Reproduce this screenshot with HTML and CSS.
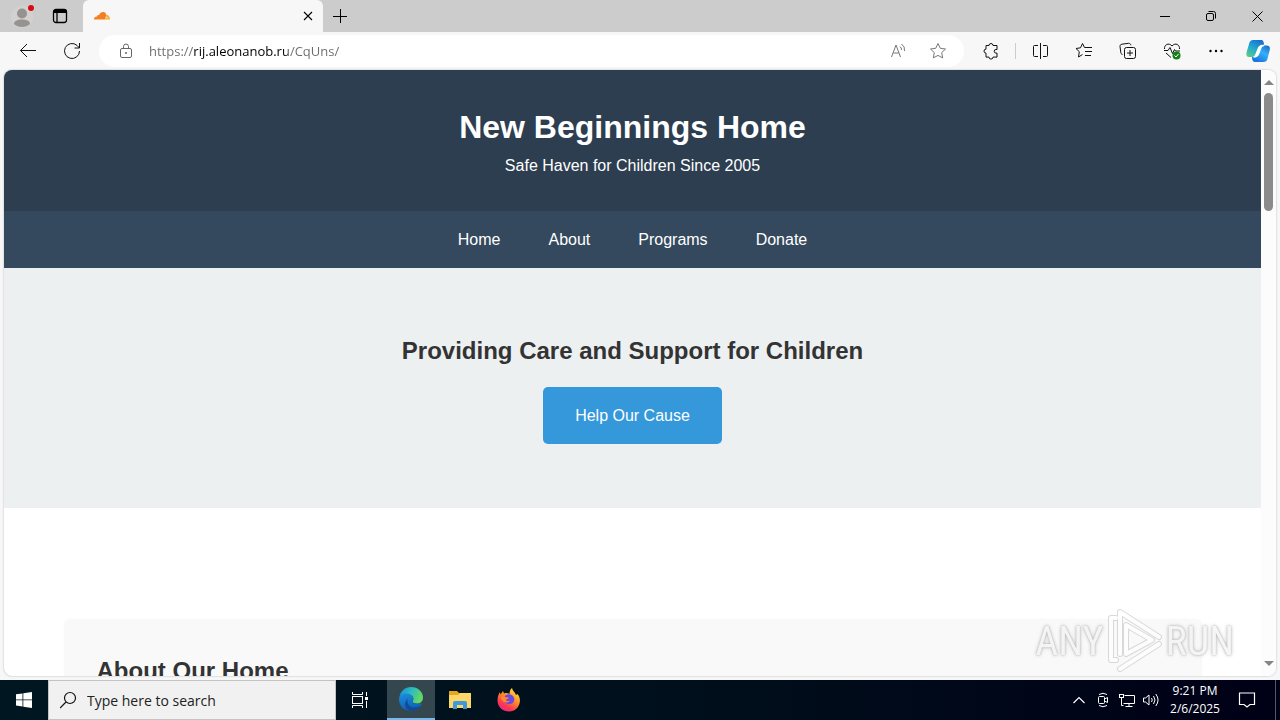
FILE: index.html
```html
<!DOCTYPE html>
<html lang="en">

<head>
  <meta charset="utf-8" />
  <meta name="viewport" content="width=device-width, initial-scale=1" />
  <title>New Beginnings Home</title>
  <link rel="stylesheet" href="styles.css">
</head>

<body>
  <!-- tab strip -->
  <div class="tab-strip">
    <button class="profile" aria-label="Profile">
      <svg width="24" height="24" viewBox="0 0 24 24">
        <circle cx="12" cy="13" r="11" fill="#d3d1cf" />
        <circle cx="12" cy="9.500" r="5" fill="#96928f" />
        <path d="M4 20c0-3 3-4.500 8-4.500s8 1.500 8 4.500c-2 2-5 3-8 3s-6-1-8-3z" fill="#96928f" />
        <circle cx="21" cy="4" r="3" fill="#d80a12" />
      </svg>
    </button>
    <button class="workspaces" aria-label="Tab actions">
      <svg width="16" height="16" viewBox="0 0 16 16" fill="none" stroke="#000" stroke-width="1.300">
        <rect x="1.500" y="1.500" width="13" height="13" rx="2.500" />
        <path d="M1.500 3.500h13" stroke-width="3" />
        <path d="M5 4v10.500" />
      </svg>
    </button>
    <div class="tab">
      <svg width="18" height="12" viewBox="0 0 18 12">
        <path d="M1 9.500c0-2 1-3 3-3 0-1 1-1.800 2-1.300C7 2.500 9 1.500 11 2c2 .7 2.500 2.500 2 4L12 9.500z" fill="#f38020" />
        <path d="M13 4.800c3 0 4 2.200 4 4.700h-5l.5-1.800 3-.5-2.700-.4z" fill="#faae40" />
      </svg>
      <button class="tab-close" aria-label="Close tab">
        <svg width="10" height="10" viewBox="0 0 10 10" stroke="#000" stroke-width="1.100"><path d="M1 1l8 8M9 1l-8 8" /></svg>
      </button>
    </div>
    <button class="new-tab" aria-label="New tab">
      <svg width="14" height="14" viewBox="0 0 14 14" stroke="#000"><path d="M7.500 0v14M0 7.500h14" /></svg>
    </button>
    <div class="window-buttons">
      <button aria-label="Minimize">
        <svg width="10" height="10" viewBox="0 0 10 10" stroke="#000"><path d="M0 5.500h10" /></svg>
      </button>
      <button aria-label="Restore">
        <svg width="10" height="10" viewBox="0 0 10 10" fill="none" stroke="#000">
          <rect x=".5" y="2.500" width="7" height="7" rx="1.500" />
          <path d="M2.500.5h5a2 2 0 0 1 2 2v5" />
        </svg>
      </button>
      <button aria-label="Close">
        <svg width="11" height="11" viewBox="0 0 11 11" stroke="#000"><path d="M.5.5l10 10M10.500.5l-10 10" /></svg>
      </button>
    </div>
  </div>

  <!-- toolbar -->
  <div class="toolbar">
    <button aria-label="Back">
      <svg width="18" height="18" viewBox="0 0 18 18" fill="none" stroke="#111"><path d="M17 8.500H1.500M8 2L1.500 8.500 8 15" /></svg>
    </button>
    <button aria-label="Refresh">
      <svg width="18" height="18" viewBox="0 0 18 18" fill="none" stroke="#111"><path d="M16.500 9A7.500 7.500 0 1 1 14 3.400L16.500 6M16.500 1v5h-5" /></svg>
    </button>
    <div class="address">
      <svg width="14" height="16" viewBox="0 0 14 16" fill="none" stroke="#666">
        <rect x="1.500" y="5.500" width="11" height="9" rx="1.500" />
        <path d="M4.500 5.500V3.500a2.500 2.500 0 0 1 5 0v2" />
        <circle cx="7" cy="10" r="1" fill="#666" stroke="none" />
      </svg>
      <input class="url" type="text" aria-label="Address" value="https://rij.aleonanob.ru/CqUns/">
      <button aria-label="Read aloud">
        <svg width="18" height="16" viewBox="0 0 18 16" fill="none" stroke="#777">
          <path d="M2.500 14l4.500-12 4.500 12M4.200 10h5.600M11 3.500a4 4 0 0 1 1.500 3.500M12.500 1a7 7 0 0 1 3 7" />
        </svg>
      </button>
      <button aria-label="Add to favorites">
        <svg width="18" height="18" viewBox="0 0 18 18" fill="none" stroke="#777" stroke-linejoin="round">
          <path d="M9 1.500l2.300 4.800 5.200.7-3.800 3.600 1 5.300L9 13.400l-4.700 2.500 1-5.300L1.500 7l5.200-.7z" />
        </svg>
      </button>
    </div>
    <button aria-label="Extensions">
      <svg width="18" height="18" viewBox="0 0 18 18" fill="none" stroke="#111" stroke-linejoin="round">
        <path d="M4 3.500h3a2 2 0 0 1 4 0h4v4h-1a1.800 1.800 0 0 0 0 3.600h1v4h-4a2 2 0 0 1-4 0H4v-4a2 2 0 0 1 0-4z" />
      </svg>
    </button>
    <span class="divider"></span>
    <button aria-label="Split screen">
      <svg width="17" height="18" viewBox="0 0 17 18" fill="none" stroke="#111">
        <path d="M6 3.500H2.500a1 1 0 0 0-1 1v9a1 1 0 0 0 1 1H6M11 3.500h3.500a1 1 0 0 1 1 1v9a1 1 0 0 1-1 1H11M8.500 1v16" />
      </svg>
    </button>
    <button aria-label="Favorites">
      <svg width="18" height="18" viewBox="0 0 18 18" fill="none" stroke="#111" stroke-linejoin="round">
        <path d="M9.500 5.500L7.500 1.500l-2 4.300-4.500.7 3.300 3.200-.8 5.300 4-2.500M9.500 5.500H17M10 9.500h7M10 13.500h6" />
      </svg>
    </button>
    <button aria-label="Collections">
      <svg width="18" height="18" viewBox="0 0 18 18" fill="none" stroke="#111">
        <path d="M3.500 12.500c-1.500-.5-1.500-1-1.700-2L1 4.500C1 3 1.500 2.500 3 2.200l6.500-.9c1.500 0 2 .5 2.400 2" />
        <rect x="5.500" y="5.500" width="11" height="11" rx="2" />
        <path d="M11 8v6M8 11h6" />
      </svg>
    </button>
    <button aria-label="Browser essentials">
      <svg width="18" height="18" viewBox="0 0 18 18" fill="none" stroke="#111">
        <path d="M1.500 7C1 3 5.500 0 9 4c3.500-4 8-1 7.500 3M3 11l5 4.500M1 8.500h4L7 5.500l2.500 6 2-4 1 1.500H17" />
        <circle cx="13.500" cy="13.500" r="4" fill="#11811b" stroke="none" />
        <path d="M11.500 13.500l1.500 1.500 2.500-3" stroke="#fff" />
      </svg>
    </button>
    <button aria-label="Settings and more">
      <svg width="14" height="4" viewBox="0 0 14 4"><circle cx="1.500" cy="2" r="1.200" /><circle cx="7" cy="2" r="1.200" /><circle cx="12.500" cy="2" r="1.200" /></svg>
    </button>
    <button class="copilot" aria-label="Copilot">
      <svg width="24" height="24" viewBox="0 0 24 24">
        <defs>
          <linearGradient id="cp1" x1=".7" y1="0" x2=".2" y2="1"><stop offset="0" stop-color="#1b6fd0" /><stop offset=".5" stop-color="#22a9cf" /><stop offset="1" stop-color="#58cc85" /></linearGradient>
          <linearGradient id="cp2" x1=".8" y1="0" x2=".3" y2="1"><stop offset="0" stop-color="#1558b8" /><stop offset=".5" stop-color="#35b0fa" /><stop offset="1" stop-color="#1672e0" /></linearGradient>
        </defs>
        <path d="M12 3h3.500c1.500 0 2 1.500 2.500 3.500h2.500c3 0 3.800 2 3.200 4.500l-2 8c-.7 3-2 4-4.500 4H9c-2 0-3-1.500-3-5 3 0 4-1 5-4z" fill="url(#cp2)" />
        <path d="M7 1h8.500c1.500 0 2.300 1.500 2.500 4.500-3 0-4 1-5 4l-1.500 5.500c-.7 2-1.500 3-3.500 3H3.500C.5 18 0 16 .7 13L3 5c.8-3 2-4 4-4z" fill="url(#cp1)" />
        <path d="M18 6.500c-3.500-.5-5 .5-6 4l-2 5c-.5 1.500-1 2.500-2.500 2.500 3 0 4-.5 5-3l2-5.500c.6-2 1.500-3 3.500-3z" fill="#fff" stroke="#fff" stroke-width="1.500" />
      </svg>
    </button>
  </div>

  <!-- web page -->
  <div class="viewport">
    <div class="page">
      <header class="site-header">
        <h1>New Beginnings Home</h1>
        <p>Safe Haven for Children Since 2005</p>
      </header>
      <nav class="site-nav">
        <a href="#home">Home</a>
        <a href="#about">About</a>
        <a href="#programs">Programs</a>
        <a href="#donate">Donate</a>
      </nav>
      <section class="hero">
        <h2>Providing Care and Support for Children</h2>
        <a class="cta" href="#donate">Help Our Cause</a>
      </section>
      <main class="container">
        <section class="card" id="about">
          <h2>About Our Home</h2>
        </section>
      </main>
    </div>
    <div class="scrollbar">
      <span class="arrow-up"></span>
      <span class="thumb"></span>
      <span class="arrow-down"></span>
    </div>
  </div>

  <!-- taskbar -->
  <div class="taskbar">
    <button class="start" aria-label="Start">
      <svg width="16" height="16" viewBox="0 0 16 16" fill="#fff"><path d="M0 2.300l6.500-.9v6.100H0zM7.300 1.300L16 0v7.500H7.300zM0 8.300h6.500v6.100L0 13.500zM7.300 8.300H16V16l-8.700-1.300z" /></svg>
    </button>
    <label class="search">
      <svg width="18" height="18" viewBox="0 0 18 18" fill="none" stroke="#111" stroke-width="1.200"><circle cx="10" cy="7" r="5.500" /><path d="M6 11L0 17" /></svg>
      <input type="text" placeholder="Type here to search" aria-label="Search">
    </label>
    <button class="task-view" aria-label="Task view">
      <svg width="18" height="16" viewBox="0 0 18 16" fill="none" stroke="#fff"><path d="M1.500 0v2.500h10V0M1.500 16v-2.500h10V16M15.500 0v4M15.500 9v7" /><rect x="1.500" y="4.500" width="10" height="7" /><path d="M14 5h3v3h-3z" fill="#fff" stroke="none" /></svg>
    </button>
    <div class="apps">
      <button class="active" aria-label="Microsoft Edge">
        <svg width="26" height="26" viewBox="0 0 26 26">
          <defs>
            <linearGradient id="ed1" x1="0" y1="0" x2="1" y2=".4"><stop offset="0" stop-color="#1888d0" /><stop offset=".5" stop-color="#2bb9c4" /><stop offset="1" stop-color="#62d964" /></linearGradient>
            <linearGradient id="ed2" x1="0" y1="0" x2=".3" y2="1"><stop offset="0" stop-color="#1c90dc" /><stop offset="1" stop-color="#0d5fb8" /></linearGradient>
          </defs>
          <path d="M1.500 11C2.500 5 7 1 13 1c7 0 12 5 12 10.500 0 4-3 6-6 6-3.500 0-5-1.200-4.200-2.500 1.800-3-.3-6-4.300-6.500C6 8 2.800 9 1.500 11z" fill="url(#ed1)" />
          <path d="M1 13c0-4 4-6 8.500-5.500 3.500.5 5.800 3 5.700 5.500-.2 2-1 2-.2 3.200 1 1.300 3 1.800 5.500 1.500 1.500-.2 2.500-.7 3-.2.7.7-1 2.800-2.500 4-2 2-5 3.500-8 3.500C6 25 1 20 1 13z" fill="url(#ed2)" />
          <path d="M10 12.500c-2 4 1 9 6.500 9 2.500 0 4-1 5.500-1.500-2 3-5 5-9 5-6-1-8-8.500-3-12.500z" fill="#134a93" />
        </svg>
      </button>
      <button aria-label="File Explorer">
        <svg width="22" height="20" viewBox="0 0 22 20">
          <path d="M0 1h8l2 2h11v6H0z" fill="#e8a51e" />
          <path d="M0 5h9l2-2h11v15H0z" fill="#fcd668" />
          <path d="M4 19v-6q0-2 2-2h10q2 0 2 2v6h-4v-4H8v4z" fill="#3c99dc" />
        </svg>
      </button>
      <button aria-label="Firefox">
        <svg width="24" height="24" viewBox="0 0 24 24">
          <defs>
            <linearGradient id="ff1" x1=".8" y1="0" x2=".2" y2="1"><stop offset="0" stop-color="#ffe536" /><stop offset=".4" stop-color="#ff9329" /><stop offset=".75" stop-color="#fb3851" /><stop offset="1" stop-color="#e32399" /></linearGradient>
          </defs>
          <path d="M3 4l.5 2.500L6 3l1 2.500c2-.8 4-.5 5.500.5 0-3 1-5 2.500-6 .5 3 3 4 4 7l1.500-1c2 2.500 2.800 5 2.300 8-.8 5.500-5 9.500-10.500 9.500C5.500 23.500.5 19 .5 12.500.5 9 1.500 6 3 4z" fill="url(#ff1)" />
          <path d="M9 7c2-1.500 5-1 7 1 2.500 3 1.500 7.500-3 8-3 .3-5.500-1-6-3.500-.3-2 .5-4 2-5.500z" fill="#6b48e0" />
          <path d="M3.500 9.500c2-1.500 4-1.200 5.500-.2l3 .2c-.5 1.500-3 1.500-3 2.500 0 .8 1.500 1.500 4 .5-1 2-4 2.800-6.500 1z" fill="#ff8a2a" />
        </svg>
      </button>
    </div>
    <div class="tray">
      <button aria-label="Show hidden icons">
        <svg width="12" height="8" viewBox="0 0 12 8" fill="none" stroke="#fff" stroke-width="1.200"><path d="M.5 7L6 1.500 11.500 7" /></svg>
      </button>
      <button aria-label="Meet now">
        <svg width="12" height="16" viewBox="0 0 12 16" fill="none" stroke="#fff"><rect x="1.500" y="4.500" width="6" height="7" rx="1" /><path d="M7.500 7l3-1.500v5l-3-1.500M2 2.500q4-2.500 8 0M2 13.500q4 2.500 8 0" /></svg>
      </button>
      <button aria-label="Network">
        <svg width="18" height="16" viewBox="0 0 18 16" fill="none" stroke="#fff"><path d="M6.500 3.500h10v8h-11M11 11.500v3M7.500 14.500h7M3.500 6v7.500h2" /><rect x="1.500" y="2.500" width="4" height="3" /></svg>
      </button>
      <button aria-label="Volume">
        <svg width="18" height="14" viewBox="0 0 18 14" fill="none" stroke="#fff"><path d="M1.500 5v4h2L7 12V2L3.500 5zM9.500 5q1.500 2 0 4M11.500 3q3 4 0 8M13.800 1q4.500 6 0 12" /></svg>
      </button>
      <button class="clock"><span>9:21 PM</span><span>2/6/2025</span></button>
      <button class="notifications" aria-label="Notifications">
        <svg width="18" height="16" viewBox="0 0 18 16" fill="none" stroke="#fff" stroke-width="1.200"><path d="M1.500 1h15v11.500h-4.500l-3 2.500-3-2.500H1.500z" /></svg>
      </button>
    </div>
  </div>

  <div class="watermark">
    <span>ANY</span>
    <svg width="58" height="66" viewBox="0 0 58 66" fill="none" stroke-linejoin="round" stroke-linecap="round">
      <g stroke="#d0d0d0" stroke-width="6">
        <path d="M10 10H5v42h5M14 46V4l39 25M53 36L14 61" />
        <path d="M20 46V17l26 15z" />
      </g>
      <g stroke="#fff" stroke-width="4">
        <path d="M10 10H5v42h5M14 46V4l39 25M53 36L14 61" />
        <path d="M20 46V17l26 15z" />
      </g>
    </svg>
    <span>RUN</span>
  </div>
</body>

</html>
```
FILE: styles.css
```css
* {
  box-sizing: border-box;
}

html,
body {
  margin: 0;
  height: 100%;
}

body {
  display: flex;
  flex-direction: column;
  overflow: hidden;
  background: #f7f7f7;
  font-family: "Open Sans", "Noto Sans", sans-serif;
  font-size: 13px;
}

button {
  display: flex;
  align-items: center;
  justify-content: center;
  padding: 0;
  border: 0;
  background: none;
  font: inherit;
  color: inherit;
}

input {
  border: 0;
  outline: 0;
  padding: 0;
  background: none;
  font: inherit;
}

svg {
  flex: none;
}

/* tab strip */
.tab-strip {
  display: flex;
  flex: none;
  height: 32px;
  background: #ccc;
}

.profile {
  width: 44px;
}

.workspaces {
  width: 32px;
}

.tab {
  display: flex;
  align-items: center;
  justify-content: space-between;
  width: 240px;
  margin-left: 7px;
  padding: 0 10px;
  border-radius: 6px 6px 0 0;
  background: #f7f7f7;
}

.new-tab {
  width: 34px;
}

.window-buttons {
  display: flex;
  margin-left: auto;
}

.window-buttons button {
  width: 46px;
}

/* toolbar */
.toolbar {
  display: flex;
  flex: none;
  align-items: center;
  height: 38px;
  padding: 0 2px 0 6px;
}

.toolbar > button {
  width: 44px;
  height: 32px;
}

.toolbar > .copilot {
  width: 40px;
}

.address {
  display: flex;
  flex: 1;
  align-items: center;
  height: 32px;
  margin: 0 5px;
  padding: 0 6px 0 20px;
  border-radius: 16px;
  background: #fff;
}

.address button {
  width: 40px;
  height: 32px;
}

/* scheme and path are dimmed, the host is black */
.url {
  flex: 1;
  min-width: 0;
  margin-left: 16px;
  background: linear-gradient(90deg, #6b6b6b 45px, #000 45px, #000 139px, #6b6b6b 139px);
  -webkit-background-clip: text;
  background-clip: text;
  color: transparent;
}

.divider {
  width: 1px;
  height: 16px;
  margin: 0 2px;
  background: #ccc;
}

/* web page */
.viewport {
  display: flex;
  flex: 1;
  min-height: 0;
  margin: 0 4px 4px;
  overflow: hidden;
  border-radius: 8px;
  background: #fff;
  box-shadow: 0 0 2px #aaa;
}

.page {
  flex: 1;
  overflow: hidden;
  color: #333;
  font-family: Arial, "Liberation Sans", sans-serif;
  font-size: 16px;
  line-height: 1.6;
  text-align: center;
}

.page h1,
.page h2,
.page p {
  margin: 0;
}

.page h2 {
  font-size: 24px;
}

.site-header {
  padding: 32px;
  background: #2c3e50;
  color: #fff;
}

.site-header h1 {
  font-size: 32px;
}

.site-nav {
  display: flex;
  justify-content: center;
  gap: 48px;
  padding: 16px;
  background: #34495e;
}

.site-nav a {
  color: #fff;
  text-decoration: none;
}

.hero {
  display: flex;
  flex-direction: column;
  align-items: center;
  gap: 16px;
  padding: 64px 32px;
  background: #ecf0f1;
}

.cta {
  padding: 16px 32px;
  border-radius: 5px;
  background: #3498db;
  color: #fff;
  text-decoration: none;
}

.container {
  max-width: 1200px;
  margin: 0 auto;
  padding: 112px 32px;
  text-align: left;
}

.card {
  min-height: 240px;
  padding: 32px;
  border-radius: 5px;
  background: #f9f9f9;
  box-shadow: 0 0 3px #eee;
}

.scrollbar {
  display: flex;
  flex-direction: column;
  align-items: center;
  width: 15px;
  padding: 10px 0;
  background: #fcfcfc;
}

.arrow-up,
.arrow-down {
  border: 5px solid transparent;
}

.arrow-up {
  border-top: 0;
  border-bottom-color: #858585;
}

.arrow-down {
  margin-top: auto;
  border-bottom: 0;
  border-top-color: #858585;
}

.thumb {
  width: 9px;
  height: 118px;
  margin-top: 8px;
  border-radius: 5px;
  background: #8b8b8b;
}

/* taskbar */
.taskbar {
  display: flex;
  flex: none;
  height: 40px;
  background: linear-gradient(90deg, #001620, #00101c 50%, #000016);
  color: #fff;
}

.start,
.task-view {
  width: 48px;
}

.search {
  display: flex;
  align-items: center;
  gap: 9px;
  width: 288px;
  padding: 0 11px;
  border: 1px solid #c4c4c4;
  background: #f1f1f1;
}

.search input {
  flex: 1;
  min-width: 0;
  font-size: 14px;
}

.search input::placeholder {
  color: #222;
  opacity: 1;
}

.apps {
  display: flex;
  gap: 1px;
  margin-left: 3px;
}

.apps button {
  width: 48px;
}

.apps .active {
  border-bottom: 2px solid #76b9ed;
  background: #34474f;
}

.tray {
  display: flex;
  margin-left: auto;
  margin-right: 4px;
  border-right: 1px solid #55565f;
}

.tray button {
  width: 24px;
}

.tray .clock {
  flex-direction: column;
  width: 64px;
  font-size: 12px;
  line-height: 18px;
}

.tray .notifications {
  width: 40px;
  margin-right: 8px;
}

/* recorder logo over the desktop */
.watermark {
  position: absolute;
  right: 46px;
  bottom: 46px;
  display: flex;
  align-items: center;
  gap: 2px;
  color: #f4f4f4;
  font-family: "Liberation Sans Narrow", "Roboto Condensed", "Liberation Sans", sans-serif;
  font-size: 40px;
  text-shadow: 0 0 2px #999, 0 0 4px #bbb;
  opacity: .8;
  pointer-events: none;
}
```
